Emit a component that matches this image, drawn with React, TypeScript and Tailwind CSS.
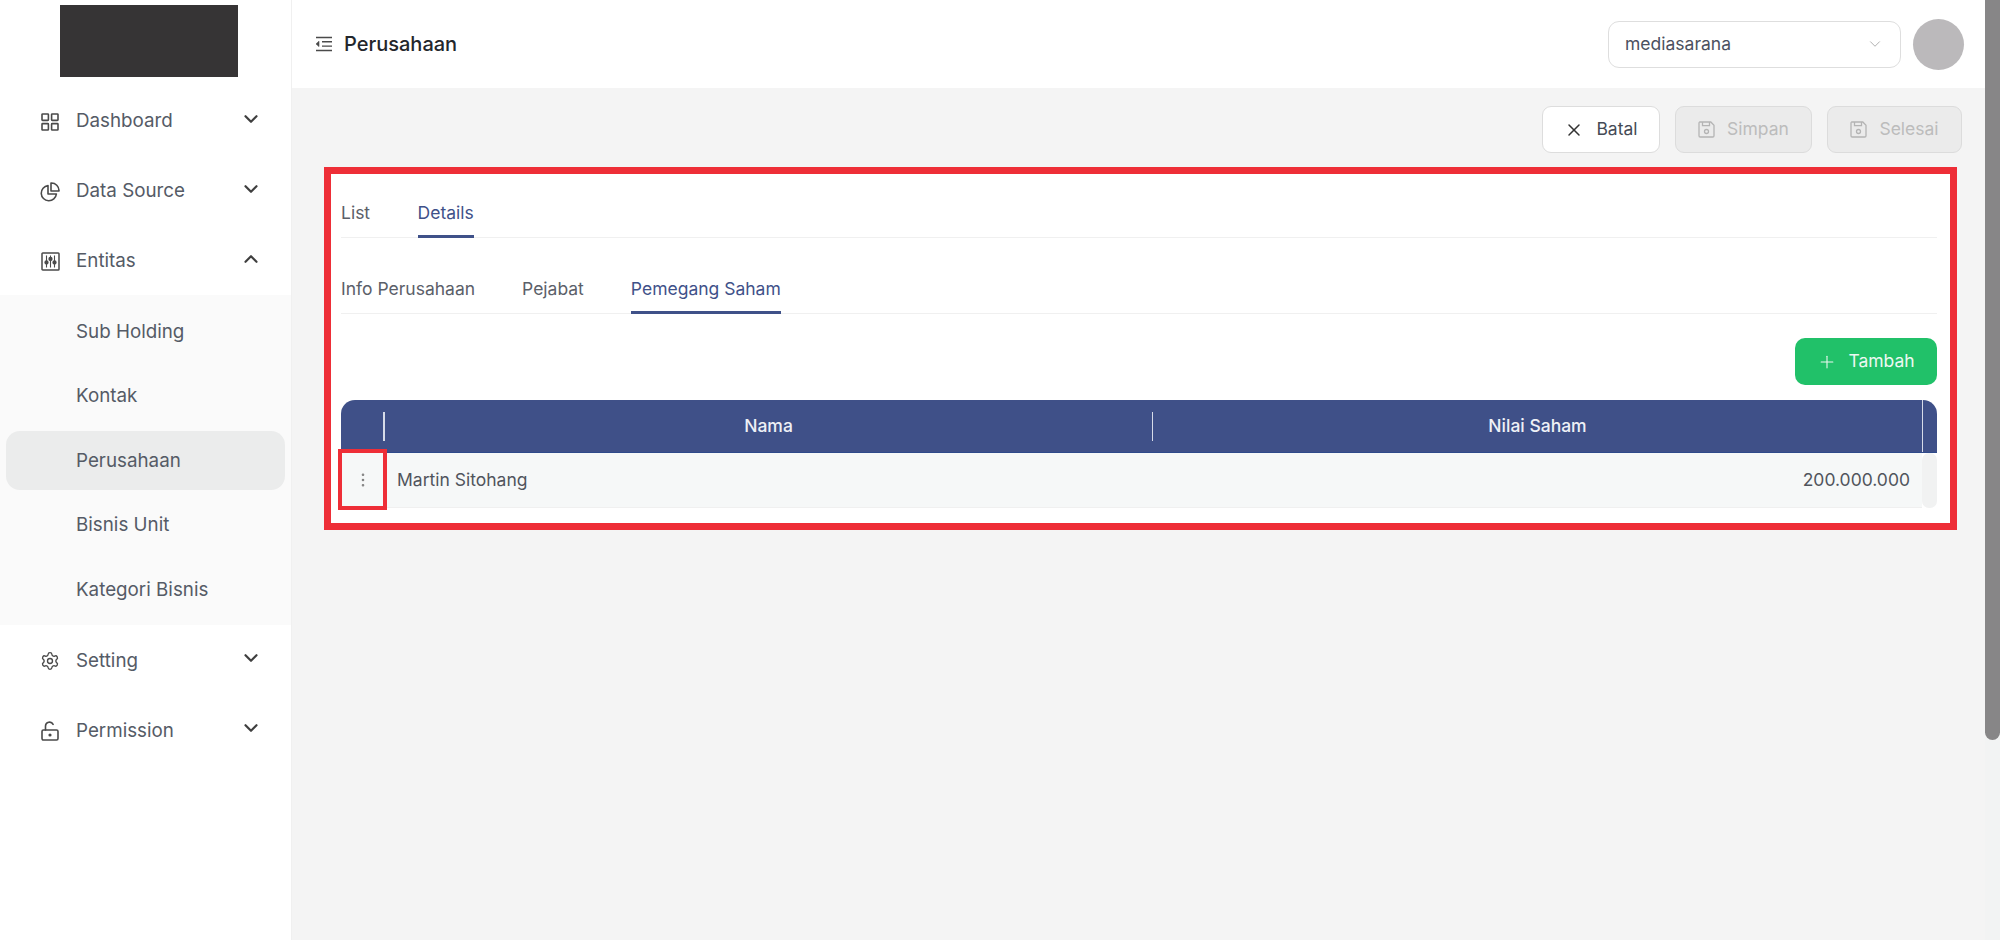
import React from "react";
import { ChevronDown, ChevronUp, X, Plus, EllipsisVertical, Settings } from "lucide-react";

const Grid = () => (
  <svg width="18" height="18" viewBox="0 0 18 18" fill="none" stroke="#4a4a4a" strokeWidth="1.6">
    <rect x="1" y="1" width="6.4" height="6.4" rx="0.6" />
    <rect x="10.6" y="1" width="6.4" height="6.4" rx="0.6" />
    <rect x="1" y="10.6" width="6.4" height="6.4" rx="0.6" />
    <rect x="10.6" y="10.6" width="6.4" height="6.4" rx="0.6" />
  </svg>
);
const Pie = () => (
  <svg width="20" height="20" viewBox="0 0 20 20" fill="none" stroke="#4a4a4a" strokeWidth="1.6" strokeLinejoin="round">
    <path d="M8 3.6A7.6 7.6 0 1 0 16.4 12H8Z" />
    <path d="M11 1a7.6 7.6 0 0 1 8 8h-8Z" />
  </svg>
);
const Sliders = () => (
  <svg width="19" height="19" viewBox="0 0 19 19" fill="none" stroke="#4a4a4a" strokeWidth="1.5">
    <rect x="1" y="1" width="17" height="17" rx="0.8" />
    <path d="M5.5 3.5v12M9.5 3.5v12M13.5 3.5v12" strokeWidth="1.1" />
    <circle cx="5.5" cy="10.5" r="1.4" fill="#4a4a4a" />
    <circle cx="9.5" cy="7" r="1.4" fill="#4a4a4a" />
    <circle cx="13.5" cy="10.5" r="1.4" fill="#4a4a4a" />
  </svg>
);
const Unlock = () => (
  <svg width="18" height="20" viewBox="0 0 18 20" fill="none" stroke="#4a4a4a" strokeWidth="1.6" strokeLinecap="round">
    <rect x="1" y="9" width="16" height="10" rx="1.4" />
    <path d="M4.5 9V5a4 4 0 0 1 7.6-1.6" />
    <circle cx="9" cy="14" r="0.8" fill="#4a4a4a" />
  </svg>
);
const Indent = () => (
  <svg width="18" height="16" viewBox="0 0 18 16" fill="none" stroke="#4a4a4a" strokeWidth="1.4">
    <path d="M1 1.5h16M7 5.8h10M7 10.1h10M1 14.5h16" />
    <path d="M4 5.2 1 7.9l3 2.7Z" fill="#4a4a4a" strokeWidth="0.6" />
  </svg>
);
const Save = () => (
  <svg width="17" height="17" viewBox="0 0 17 17" fill="none" stroke="#b4b4b4" strokeWidth="1.3">
    <path d="M1.6 1h11.2L16 4.2v10.6a1.2 1.2 0 0 1-1.2 1.2H2.2A1.2 1.2 0 0 1 1 14.8V2a1 1 0 0 1 .6-1Z" />
    <path d="M4.5 1v3.6h7V1" />
    <circle cx="8.5" cy="10.5" r="2" />
  </svg>
);

const MenuRow = ({ icon, label, open }: { icon: React.ReactNode; label: string; open?: boolean }) => (
  <div className="flex h-[70px] items-center pt-[3px] text-[#555b66]">
    <div className="flex w-[76px] shrink-0 justify-end pr-[15px]"><div className="flex w-[22px] justify-center">{icon}</div></div>
    <span className="flex-1">{label}</span>
    <div className="mr-[29px] mt-[-6px] text-[#3f3f3f]">
      {open ? <ChevronUp size={22} strokeWidth={2.4} /> : <ChevronDown size={22} strokeWidth={2.4} />}
    </div>
  </div>
);

const SubItem = ({ label, active }: { label: string; active?: boolean }) => (
  <div className={`mx-[6px] flex h-[59px] items-center rounded-[14px] pl-[70px] pt-[2px] text-[#555b66] ${active ? "bg-[#ebecec]" : ""}`}>{label}</div>
);

const Btn = ({ icon, label, disabled, w }: { icon: React.ReactNode; label: string; disabled?: boolean; w: string }) => (
  <div className={`flex h-[47px] items-center justify-center gap-[12px] rounded-[9px] border text-[17.5px] ${w} ${disabled ? "border-[#dcdcdc] bg-[#ebebeb] text-[#bcbcbc]" : "border-[#dddddd] bg-white text-[#444a55]"}`}>
    {icon}
    <span>{label}</span>
  </div>
);

const Tab = ({ label, active }: { label: string; active?: boolean }) => (
  <div className={`-mb-px flex h-[46px] items-center whitespace-nowrap border-b-[3px] pb-[1px] ${active ? "border-[#3f5189] text-[#3f5189]" : "border-transparent text-[#5b6069]"}`}>{label}</div>
);

export default function App() {
  return (
    <div className="flex h-[940px] w-[2000px] overflow-hidden bg-[#f4f4f4] text-[17.5px] font-['Inter',sans-serif]">
      <aside className="flex w-[292px] shrink-0 flex-col border-r border-[#f0f0f0] bg-white text-[18.8px]">
        <div className="h-[85px] pt-[5px] pl-[60px]">
          <div className="h-[72px] w-[178px] bg-[#363435]" />
        </div>
        <MenuRow icon={<Grid />} label="Dashboard" />
        <MenuRow icon={<Pie />} label="Data Source" />
        <MenuRow icon={<Sliders />} label="Entitas" open />
        <div className="flex flex-col gap-[5.5px] bg-[#fafafa] pt-[6.5px] pb-[6px]">
          <SubItem label="Sub Holding" />
          <SubItem label="Kontak" />
          <SubItem label="Perusahaan" active />
          <SubItem label="Bisnis Unit" />
          <SubItem label="Kategori Bisnis" />
        </div>
        <MenuRow icon={<Settings size={20} strokeWidth={1.6} color="#4a4a4a" />} label="Setting" />
        <MenuRow icon={<Unlock />} label="Permission" />
      </aside>

      <main className="flex min-w-0 flex-1 flex-col">
        <header className="flex h-[88px] shrink-0 items-center bg-white pl-[23px] pr-[21px]">
          <Indent />
          <h1 className="ml-[11px] flex-1 text-[20px] font-medium text-[#23262b]">Perusahaan</h1>
          <div className="flex h-[47px] w-[293px] items-center justify-between rounded-[11px] border border-[#dedede] pl-[16px] pr-[16px] text-[17.5px] text-[#4b5160]">
            <span>mediasarana</span>
            <ChevronDown size={18} strokeWidth={1.2} color="#a8a8a8" />
          </div>
          <div className="ml-[12px] h-[51px] w-[51px] rounded-full bg-[#bbb9bb]" />
        </header>

        <div className="flex flex-1 flex-col pr-[23px] pt-[18px] pl-[32px]">
          <div className="flex justify-end gap-[15px]">
            <Btn w="w-[118px]" icon={<X size={20} strokeWidth={1.8} color="#333" />} label="Batal" />
            <Btn w="w-[137px]" disabled icon={<Save />} label="Simpan" />
            <Btn w="w-[135px]" disabled icon={<Save />} label="Selesai" />
          </div>

          <section className="relative mt-[14px] box-border h-[363px] w-[1633px] border-[7px] border-[#ee2e37] bg-white pl-[10px] pr-[13px] pt-[18px]">
            <div className="flex gap-[47.5px] border-b border-[#f0f0f0]">
              <Tab label="List" />
              <Tab label="Details" active />
            </div>
            <div className="mt-[30px] flex gap-[47px] border-b border-[#f0f0f0]">
              <Tab label="Info Perusahaan" />
              <Tab label="Pejabat" />
              <Tab label="Pemegang Saham" active />
            </div>

            <div className="mt-[24px] flex justify-end">
              <div className="flex h-[47px] w-[142px] items-center justify-center gap-[11px] rounded-[10px] bg-[#21c169] text-[17.5px] text-[#eef8f2]">
                <Plus size={20} strokeWidth={1.3} />
                <span>Tambah</span>
              </div>
            </div>

            <div className="mt-[15px]">
              <div className="flex h-[53px] items-center rounded-t-[14px] border-b border-[#2f4a8a] bg-[#3f5088] text-[17.5px] font-medium text-[#eef0f6]">
                <div className="flex h-[29px] w-[44px] shrink-0 border-r-2 border-[#d6dbe8]" />
                <div className="flex h-[29px] w-[768px] shrink-0 items-center justify-center border-r border-[#d6dbe8]">Nama</div>
                <div className="flex h-[29px] flex-1 items-center justify-center">Nilai Saham</div>
                <div className="h-full w-[15px] shrink-0 border-l border-[#d6dbe8]" />
              </div>
              <div className="flex h-[55px] items-center text-[17.5px] text-[#50545c]">
                <div className="flex h-full flex-1 items-center border-b border-[#f0f0f0] bg-[#f6f8f8]">
                  <div className="flex w-[44px] shrink-0 justify-center">
                    <EllipsisVertical size={18} strokeWidth={1.5} color="#808080" />
                  </div>
                  <span className="ml-[12px] flex-1">Martin Sitohang</span>
                  <span className="mr-[12px]">200.000.000</span>
                </div>
                <div className="h-full w-[15px] shrink-0 rounded-[7px] bg-[#f1f2f2]" />
              </div>
            </div>

            <div className="absolute left-[7px] top-[275px] h-[61px] w-[49px] border-4 border-[#ee2e37]" />
          </section>
        </div>
      </main>

      <div className="flex w-[15px] shrink-0 flex-col bg-[#f2f3f3]">
        <div className="h-[740px] rounded-b-[8px] bg-[#878687]" />
      </div>
    </div>
  );
}
